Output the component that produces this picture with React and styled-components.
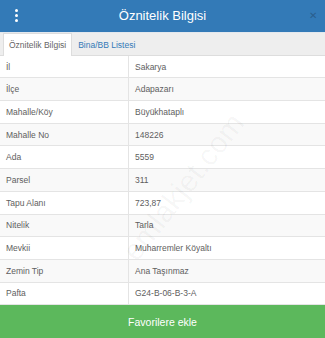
import styled, { createGlobalStyle } from "styled-components";

const Global = createGlobalStyle`
  html, body {
    margin: 0;
    padding: 0;
    background: #fff;
    font-family: "Liberation Sans", Arial, sans-serif;
  }
`;

const Panel = styled.div`
  position: relative;
  width: 325px;
  height: 338px;
  display: flex;
  flex-direction: column;
  overflow: hidden;
`;

const Header = styled.div`
  height: 32px;
  background: #337ab7;
  display: flex;
  align-items: center;
  justify-content: space-between;
  padding: 0 4px 0 12px;
  color: #fff;
  border-bottom: 1px solid #e3e8ee;
`;

const Title = styled.div`
  font-size: 13px;
  color: #fff;
`;

const Dots = styled.div`
  display: flex;
  flex-direction: column;
  gap: 2px;
  width: 8px;
  align-items: center;
  span {
    width: 3px;
    height: 3px;
    border-radius: 50%;
    background: #fff;
  }
`;

const Close = styled.div`
  width: 16px;
  font-size: 10px;
  color: #2a5e8d;
  text-align: center;
`;

const Tabs = styled.div`
  height: 22px;
  background: #eeeeee;
  display: flex;
  align-items: flex-end;
  padding-left: 3px;
  border-bottom: 1px solid #ddd;
`;

const Tab = styled.div`
  height: ${(p) => (p.$active ? "22px" : "21px")};
  display: flex;
  align-items: center;
  padding: 0 5px;
  font-size: 8.5px;
  color: ${(p) => (p.$active ? "#666" : "#337ab7")};
  background: ${(p) => (p.$active ? "#fff" : "transparent")};
  border: 1px solid ${(p) => (p.$active ? "#ddd" : "transparent")};
  border-bottom: none;
  margin-bottom: -1px;
`;

const Table = styled.div`
  flex: 1;
  display: flex;
  flex-direction: column;
`;

const Row = styled.div`
  height: 22.7px;
  display: grid;
  grid-template-columns: 129px 1fr;
  background: ${(p) => (p.$striped ? "#f9f9f9" : "#fff")};
  border-bottom: 1px solid #e4e4e4;
  box-sizing: border-box;
`;

const Cell = styled.div`
  display: flex;
  align-items: center;
  padding-left: 6px;
  font-size: 8.5px;
  color: #5e5e5e;
  border-right: ${(p) => (p.$value ? "none" : "1px solid #e4e4e4")};
`;

const Button = styled.div`
  height: 33px;
  background: #5cb85c;
  color: #fff;
  font-size: 10.5px;
  display: flex;
  align-items: center;
  justify-content: center;
`;

const Watermark = styled.div`
  position: absolute;
  left: 95px;
  top: 170px;
  font-size: 30px;
  color: rgba(0, 0, 0, 0.04);
  transform: rotate(-52deg);
  pointer-events: none;
  white-space: nowrap;
`;

const rows = [
  ["İl", "Sakarya"],
  ["İlçe", "Adapazarı"],
  ["Mahalle/Köy", "Büyükhatapl\u0131"],
  ["Mahalle No", "148226"],
  ["Ada", "5559"],
  ["Parsel", "311"],
  ["Tapu Alanı", "723,87"],
  ["Nitelik", "Tarla"],
  ["Mevkii", "Muharremler Köyaltı"],
  ["Zemin Tip", "Ana Taşınmaz"],
  ["Pafta", "G24-B-06-B-3-A"],
];

export default function App() {
  return (
    <>
      <Global />
      <Panel>
        <Header>
          <Dots>
            <span />
            <span />
            <span />
          </Dots>
          <Title>Öznitelik Bilgisi</Title>
          <Close>✕</Close>
        </Header>
        <Tabs>
          <Tab $active>Öznitelik Bilgisi</Tab>
          <Tab>Bina/BB Listesi</Tab>
        </Tabs>
        <Table>
          {rows.map(([k, v], i) => (
            <Row key={k} $striped={i % 2 === 1}>
              <Cell>{k}</Cell>
              <Cell $value>{v}</Cell>
            </Row>
          ))}
        </Table>
        <Button>Favorilere ekle</Button>
        <Watermark>emlakjet.com</Watermark>
      </Panel>
    </>
  );
}
